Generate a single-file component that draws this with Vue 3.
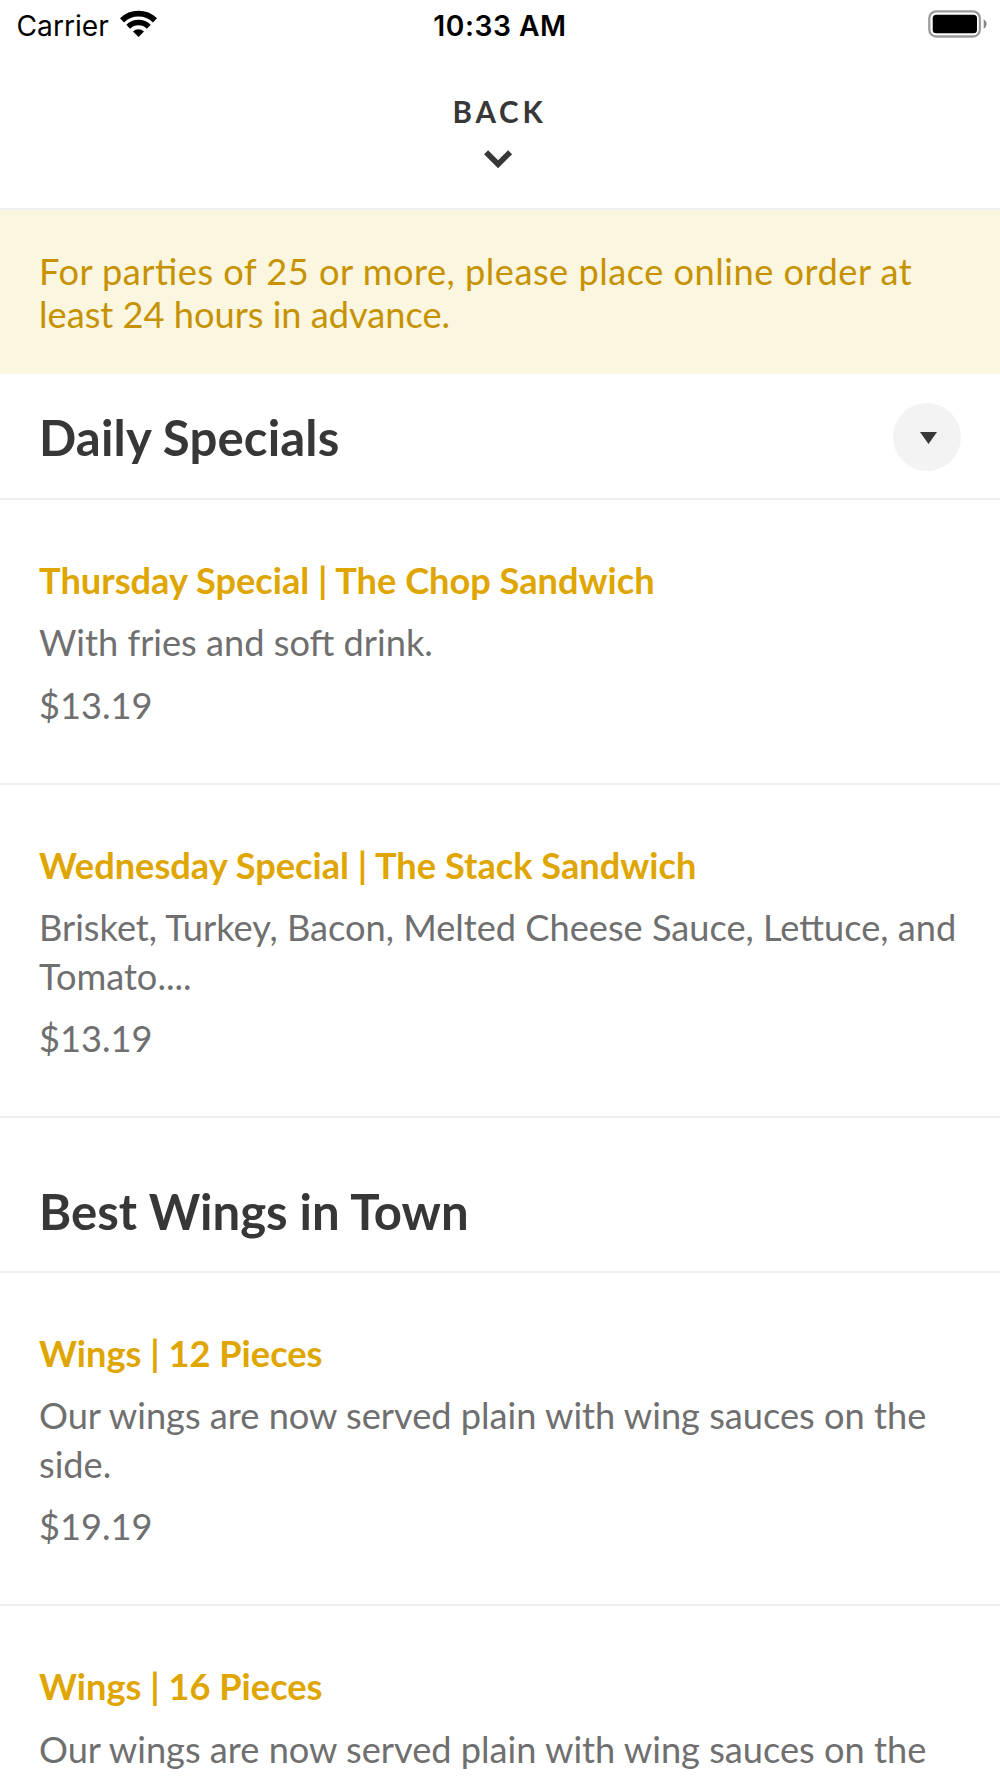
<script setup>
const sections = [
  {
    title: 'Daily Specials',
    menu: true,
    items: [
      { name: 'Thursday Special | The Chop Sandwich', lines: ['With fries and soft drink.'], price: '$13.19' },
      { name: 'Wednesday Special | The Stack Sandwich', lines: ['Brisket, Turkey, Bacon, Melted Cheese Sauce, Lettuce, and', 'Tomato....'], price: '$13.19' },
    ],
  },
  {
    title: 'Best Wings in Town',
    menu: false,
    items: [
      { name: 'Wings | 12 Pieces', lines: ['Our wings are now served plain with wing sauces on the', 'side.'], price: '$19.19' },
      { name: 'Wings | 16 Pieces', lines: ['Our wings are now served plain with wing sauces on the'] },
    ],
  },
]
</script>

<template>
  <main class="screen">
    <header class="status">
      <div class="carrier">
        <span>Carrier</span>
        <svg width="37" height="28" viewBox="0 0 37 28">
          <path d="M2 10.300 A23.700 23.700 0 0 1 35 10.300" fill="none" stroke="#000" stroke-width="5.800" />
          <path d="M8.200 16.700 A14.700 14.700 0 0 1 28.800 16.700" fill="none" stroke="#000" stroke-width="5.400" />
          <path d="M13 21.500 A8 8 0 0 1 24 21.500 L18.500 27Z" />
        </svg>
      </div>
      <div class="time">10:33 AM</div>
      <div class="power">
        <svg width="60" height="28" viewBox="0 0 60 28">
          <rect x="1.300" y="1.300" width="50.600" height="25.200" rx="7" fill="none" stroke="#9b9b9b" stroke-width="2.300" />
          <rect x="4.700" y="4.700" width="44.300" height="18.600" rx="3.500" />
          <path d="M55.700 9 Q61.500 14 55.700 19Z" fill="#848484" />
        </svg>
      </div>
    </header>
    <nav class="back">
      <span>BACK</span>
      <svg width="30" height="20" viewBox="0 0 30 20"><path d="M3.100 3.200 L15.100 15.300 L27.100 3.200" fill="none" stroke="#373737" stroke-width="5.700" /></svg>
    </nav>
    <p class="notice"><span class="loose">For parties of 25 or more, please place online order at</span><br>least 24 hours in advance.</p>
    <section v-for="section in sections" :key="section.title">
      <div class="heading" :class="{ first: section.menu }">
        <h2>{{ section.title }}</h2>
        <button v-if="section.menu" aria-label="Choose section"><svg width="17" height="12" viewBox="0 0 17 12"><path d="M0 0H17L8.500 12Z" fill="#373737" /></svg></button>
      </div>
      <article v-for="item in section.items" :key="item.name">
        <h3>{{ item.name }}</h3>
        <p class="description"><span v-for="line in item.lines" :key="line">{{ line }}</span></p>
        <p v-if="item.price" class="price">{{ item.price }}</p>
      </article>
    </section>
  </main>
</template>

<style>
body { margin: 0; background: #fff; }
</style>

<style scoped>
* { box-sizing: border-box; }
.screen { width: 1000px; height: 1778px; overflow: hidden; background: #fff; font-family: Lato, sans-serif; color: #373737; }
h2, h3, p { margin: 0; }
.status { height: 48px; display: grid; grid-template-columns: 1fr 1fr 1fr; align-items: center; padding: 0 12px; font-family: Inter, sans-serif; font-size: 28.2px; color: #000; }
.carrier { display: flex; align-items: center; gap: 11px; padding-left: 4.5px; }
.carrier span, .time { padding-top: 3px; }
.time { text-align: center; font-weight: 600; letter-spacing: 0.55px; }
.power { display: flex; justify-content: flex-end; }
.back { height: 162px; border-bottom: 2px solid #efefef; display: flex; flex-direction: column; align-items: center; padding: 45px 1px 0 0; font-size: 29.5px; line-height: 38px; font-weight: 700; letter-spacing: 3.8px; }
.back svg { margin: 18px 2.5px 0 0; }
.notice { height: 164px; background: #fbf6e0; color: #c69200; padding: 39.8px 39px 0; font-size: 36.2px; line-height: 43.5px; white-space: nowrap; }
.loose { letter-spacing: 0.5px; font-feature-settings: "liga" 1; }
.heading { height: 154.5px; padding: 32px 39px 0; border-bottom: 2px solid #efefef; display: flex; align-items: center; justify-content: space-between; }
.heading.first { height: 126px; padding-top: 2.5px; }
h2 { font-size: 49.1px; line-height: 60px; font-weight: 700; }
.first h2 { letter-spacing: 0.15px; }
button { width: 68px; height: 68px; border: 0; border-radius: 50%; background: #f3f3f3; display: flex; align-items: center; justify-content: center; padding: 2px 0 0 2px; }
article { padding: 55.8px 39px 53.5px; border-bottom: 2px solid #efefef; }
h3 { font-size: 36.2px; line-height: 48.5px; font-weight: 700; color: #dfa500; white-space: nowrap; }
.description { font-size: 36.2px; line-height: 48.5px; margin-top: 14.1px; color: #6f6f6f; }
.description span { display: block; white-space: nowrap; }
.price { font-size: 36.2px; line-height: 48.5px; margin-top: 14.1px; color: #6f6f6f; }
</style>
